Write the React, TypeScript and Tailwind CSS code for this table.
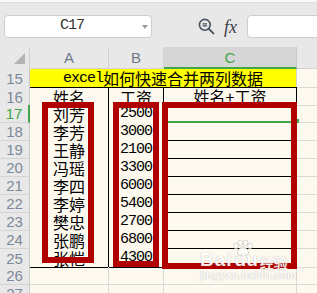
import React from "react";

const NAMES = ["刘芳", "李芳", "王静", "冯瑶", "李四", "李婷", "樊忠", "张鹏", "张恺"];
const PAY = ["2500", "3000", "2100", "3300", "6000", "5400", "2700", "6800", "4300"];

const COLS = "grid grid-cols-[30px_79px_55px_133px_20px]";
const CJK = "font-['Noto_Sans_CJK_SC','Noto_Sans',sans-serif]";
const MONO = "font-['Liberation_Mono',monospace]";

const RowHead = ({ n, active }: { n: number; active?: boolean }) => (
  <div
    className={`flex items-center justify-center bg-[#e8e8e8] border-b border-[#d4d4d4] text-[15px] leading-none ${
      active
        ? "border-r-2 border-r-[#3fa64a] text-[#3fa64a]"
        : "border-r border-r-[#c9c9c9] text-[#7d8898]"
    }`}
  >
    {n}
  </div>
);

const DCell = () => <div className="border-b border-[#d9d9d9]" />;

const Toolbar = () => (
  <div className="h-[44px] pt-[12px]">
    <div className="flex h-[23px] items-center">
      <div className="ml-[4px] flex h-[23px] w-[148px] shrink-0 items-center rounded-[4px] border border-[#cdcdcd] bg-white">
        <span className={`flex-1 text-center text-[15px] tracking-[-1px] text-[#333] ${MONO}`}>C17</span>
        <span className="flex w-[12px] justify-center">
          <svg width="6" height="4" viewBox="0 0 6 4">
            <path d="M0 0h6L3 4z" fill="#9a9a9a" />
          </svg>
        </span>
      </div>
      <svg className="ml-[46px] shrink-0" width="17" height="17" viewBox="0 0 17 17">
        <circle cx="6.8" cy="6.8" r="5.4" fill="none" stroke="#4a5160" strokeWidth="1.6" />
        <path d="M4.6 5.8h4.4M4.6 7.9h4.4" stroke="#4a5160" strokeWidth="1.2" />
        <path d="M10.8 10.8l4.6 4.6" stroke="#4a5160" strokeWidth="1.9" strokeLinecap="round" />
      </svg>
      <span className="ml-[9px] font-['Liberation_Serif',serif] text-[18px] italic leading-none text-[#3b404a]">
        fx
      </span>
      <div className="ml-[10px] h-[23px] w-[80px] shrink-0 rounded-[4px] border border-[#cdcdcd] bg-white" />
    </div>
  </div>
);

const HeaderRow = () => (
  <div className={`${COLS} h-[22px] text-[15px] leading-none`}>
    <div className="relative border-r border-[#cfcfcf]">
      <svg className="absolute left-[14px] top-[6px]" width="11" height="11" viewBox="0 0 11 11">
        <path d="M11 0v11H0z" fill="#b3b3b3" />
      </svg>
    </div>
    <div className="flex items-center justify-center border-r border-b border-[#d2d2d2] text-[#6d7a8a]">A</div>
    <div className="flex items-center justify-center border-r border-b border-[#d2d2d2] text-[#6d7a8a]">B</div>
    <div className="flex items-center justify-center border-b-2 border-r border-[#c9c9c9] border-b-[#3fa64a] bg-[#d6d6d6] text-[#3fa64a]">
      C
    </div>
    <div className="border-b border-[#d2d2d2]" />
  </div>
);

const Sheet = () => (
  <div className="relative bg-[#fdf9ef]">
    {/* row 15: merged title */}
    <div className={`${COLS} h-[18px]`}>
      <RowHead n={15} />
      <div
        className={`col-span-3 flex items-center justify-center border-b border-r border-b-black border-r-[#d4d4d4] bg-[#ffff00] text-[16px] leading-[18px] text-black ${CJK}`}
      >
        <span className={`${MONO} relative top-[1px] text-[15px] tracking-[-1px]`}>excel</span>
        如何快速合并两列数据
      </div>
      <DCell />
    </div>

    {/* row 16: headings */}
    <div className={`${COLS} h-[18px] text-[16px] leading-[18px] text-black ${CJK}`}>
      <RowHead n={16} />
      <div className="flex items-center justify-center border-r border-r-black">姓名</div>
      <div className="flex items-center justify-center border-r border-r-black">工资</div>
      <div className="flex items-center justify-center border-b border-r border-black">姓名+工资</div>
      <DCell />
    </div>

    {NAMES.map((name, i) => {
      const last = i === NAMES.length - 1;
      const active = i === 0;
      return (
        <div key={name} className={`${COLS} h-[18px] text-[16px] leading-[18px] text-black`}>
          <RowHead n={17 + i} active={active} />
          <div
            className={`flex items-center justify-center border-r border-r-black ${CJK} ${
              last ? "border-b border-b-black" : ""
            }`}
          >
            {name}
          </div>
          <div
            className={`flex items-center justify-center border-r border-r-black text-[15px] tracking-[-1px] ${MONO} ${
              last ? "border-b border-b-black" : ""
            }`}
          >
            {PAY[i]}
          </div>
          <div
            className={`relative border-r border-r-black ${
              active ? "border-b-2 border-b-[#3fa64a]" : "border-b border-b-black"
            }`}
          >
            {active && <span className="absolute -bottom-[2px] -right-[3px] h-[4px] w-[4px] bg-[#3fa64a]" />}
          </div>
          <DCell />
        </div>
      );
    })}

    {[26, 27].map((n) => (
      <div key={n} className={`${COLS} h-[18px]`}>
        <RowHead n={n} />
        <div className="border-b border-r border-[#d9d9d9]" />
        <div className="border-b border-r border-[#d9d9d9]" />
        <div className="border-b border-r border-[#d9d9d9]" />
        <DCell />
      </div>
    ))}

    {/* red annotation frames */}
    <div className="absolute left-[42px] top-[33px] h-[161px] w-[52px] border-[6px] border-[#b10000]" />
    <div className="absolute left-[113px] top-[33px] h-[165px] w-[46px] border-[6px] border-[#b10000]" />
    <div className="absolute left-[162px] top-[33px] h-[167px] w-[135px] border-[6px] border-[#b10000]" />
  </div>
);

const Watermark = () => (
  <div className="pointer-events-none absolute left-[199px] top-[239px] h-[44px] w-[95px] select-none opacity-90">
    <svg className="absolute left-[33px] top-[1px]" width="22" height="16" viewBox="0 0 22 16">
      <g fill="#fff" stroke="#c9c4bb" strokeWidth="0.8">
        <ellipse cx="4" cy="6" rx="2.3" ry="2.8" />
        <ellipse cx="8.5" cy="2.8" rx="2.3" ry="2.7" />
        <ellipse cx="13.5" cy="2.8" rx="2.3" ry="2.7" />
        <ellipse cx="18" cy="6" rx="2.3" ry="2.8" />
        <path d="M11 7c-3 0-5.5 3.5-5.5 6 0 2 2 2.5 5.5 2.5s5.5-.5 5.5-2.5c0-2.5-2.5-6-5.5-6z" />
      </g>
    </svg>
    <div className="absolute left-[1px] top-[11px] flex items-end whitespace-nowrap font-['Liberation_Sans',sans-serif] font-bold leading-none text-white [text-shadow:0_0_1px_rgba(90,80,70,0.55)]">
      <span className="text-[19px] tracking-[1px]">Bai</span>
      <span className="ml-[2px] text-[19px]">du</span>
      <span className={`ml-[2px] text-[14px] ${CJK}`}>经验</span>
    </div>
    <div className="absolute left-[1px] top-[31px] whitespace-nowrap font-['Liberation_Sans',sans-serif] text-[11px] font-bold leading-none text-white [text-shadow:0_0_1px_rgba(90,80,70,0.55)]">
      jingyan.baidu.com
    </div>
  </div>
);

export default function App() {
  return (
    <div className="relative h-[293px] w-[317px] overflow-hidden bg-[#e8e8e8] font-['Liberation_Sans',sans-serif]">
      <div className="h-[3px] border-b border-[#dddddd] bg-[#f7f7f7]" />
      <Toolbar />
      <HeaderRow />
      <Sheet />
      <Watermark />
    </div>
  );
}
